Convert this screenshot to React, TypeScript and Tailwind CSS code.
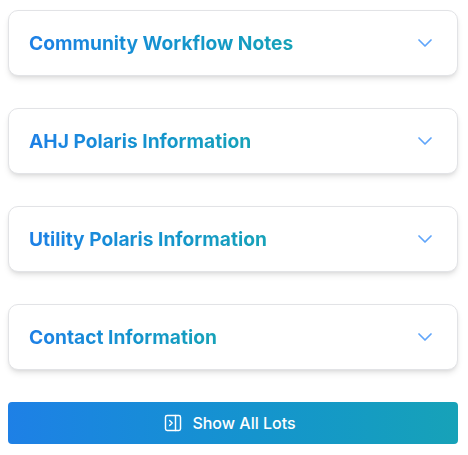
import { ChevronDown, PanelRightClose } from "lucide-react";

const items = ["Community Workflow Notes", "AHJ Polaris Information", "Utility Polaris Information", "Contact Information"];

export default function App() {
  return (
    <div className="w-[468px] h-[455px] bg-white overflow-hidden px-2 pt-[10px] font-['Inter',sans-serif]">
      <div className="w-[450px] flex flex-col gap-[32px]">
        {items.map((t) => (
          <div key={t} className="h-[66px] rounded-[10px] border border-[#e2e3e6] bg-white shadow-md flex items-center justify-between pl-5 pr-5">
            <span className="text-[19.2px] leading-7 font-bold bg-gradient-to-r from-[#1e80e6] to-[#17a2b8] bg-clip-text text-transparent">{t}</span>
            <ChevronDown className="w-6 h-6 text-[#60a5fa]" strokeWidth={1.75} />
          </div>
        ))}
      </div>
      <button className="mt-[32px] w-[450px] h-[42px] rounded flex items-center justify-center gap-[9px] pr-[7px] text-white text-base font-medium bg-gradient-to-r from-[#1e80e6] to-[#17a2b8]">
        <PanelRightClose className="w-5 h-5" strokeWidth={1.75} />
        Show All Lots
      </button>
    </div>
  );
}
